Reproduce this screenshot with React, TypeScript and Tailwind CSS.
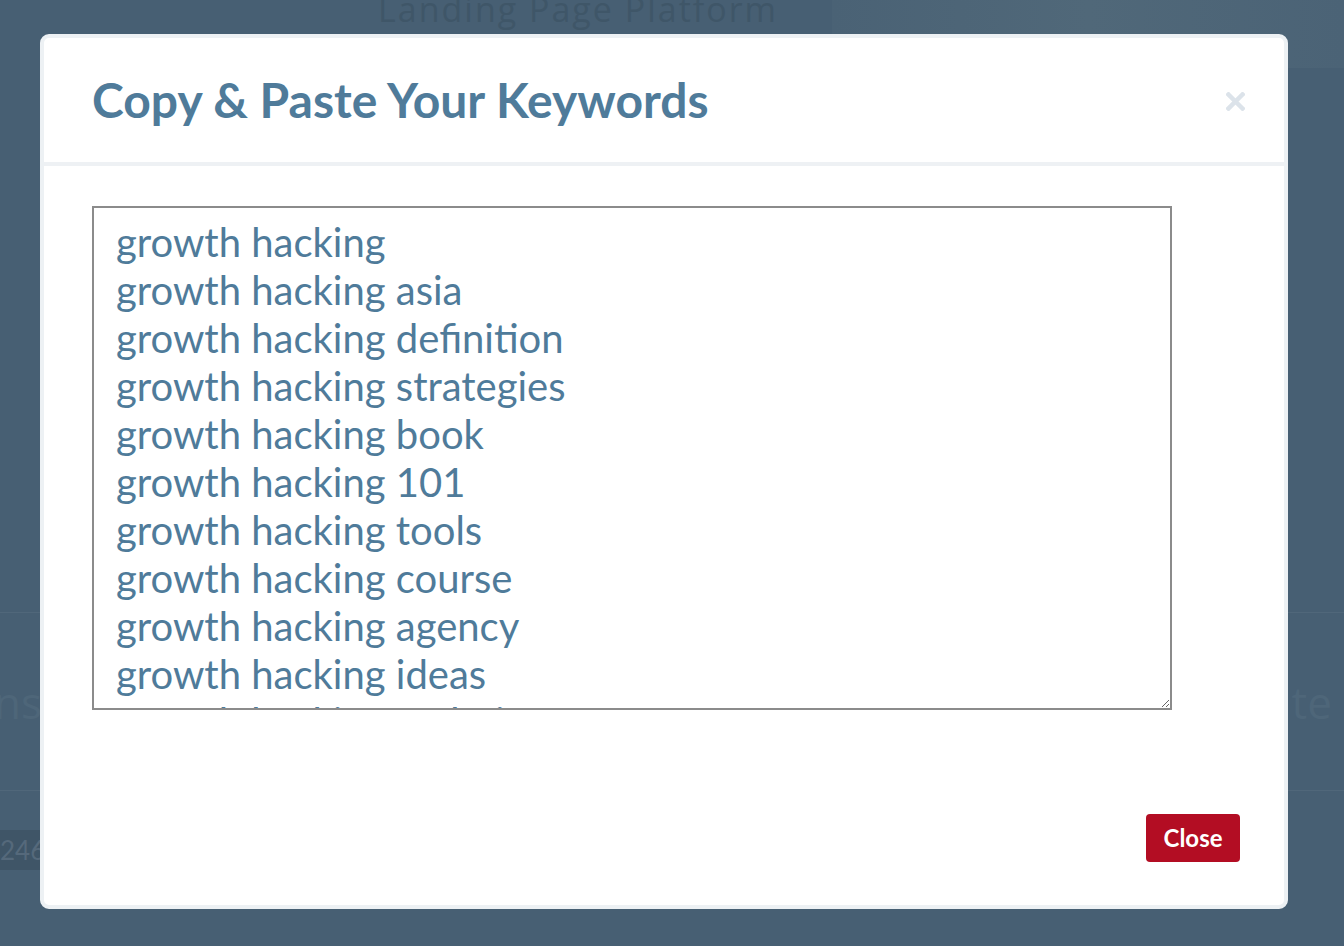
import React from "react";

const keywords = [
  "growth hacking",
  "growth hacking asia",
  "growth hacking definition",
  "growth hacking strategies",
  "growth hacking book",
  "growth hacking 101",
  "growth hacking tools",
  "growth hacking course",
  "growth hacking agency",
  "growth hacking ideas",
  "growth hacking techniques",
  "growth hacking examples",
  "growth hacking marketing",
  "growth hacking startups",
];

export default function App() {
  return (
    <div
      className="relative h-[946px] w-[1344px] overflow-hidden bg-[#475f73]"
      style={{ fontFamily: "Lato, 'Open Sans', sans-serif" }}
    >
      {/* faint page behind the overlay */}
      <div className="flex flex-col">
        <div className="flex h-[70px] items-start">
          <div className="ml-[378px] -mt-[16px] text-[34px] tracking-[2px] text-[#3f5668]" style={{ fontFamily: "'Open Sans', sans-serif" }}>
            Landing Page Platform
          </div>
          <div className="ml-auto h-[68px] w-[512px] bg-gradient-to-r from-[#4a6275] via-[#506879] to-[#4b6376]" />
        </div>
        <div className="mt-[542px] h-px w-full bg-[#50677a]" />
        <div className="flex h-[177px] items-center justify-between">
          <span className="-ml-[6px] text-[44px] text-[#4e6679]" style={{ fontFamily: "'Open Sans', sans-serif" }}>ns</span>
          <span className="mr-[12px] text-[44px] text-[#4e6679]" style={{ fontFamily: "'Open Sans', sans-serif" }}>te</span>
        </div>
        <div className="h-px w-full bg-[#50677a]" />
        <div className="mt-[39px] flex h-[40px] w-[40px] items-center bg-[#3f5567] text-[26px] text-[#55697b]">
          246
        </div>
      </div>

      {/* modal overlay */}
      <div className="absolute inset-0 flex items-start justify-start pl-[40px] pt-[34px]">
        <div className="flex h-[875px] w-[1248px] flex-col rounded-[9px] border-4 border-[#edf1f4] bg-white">
          <div className="flex h-[124px] items-center justify-between pl-[48px] pr-[39px]">
            <h2 className="text-[48px] font-bold leading-none text-[#4f7b9a]">
              Copy &amp; Paste Your Keywords
            </h2>
            <svg width="19" height="19" viewBox="0 0 19 19" className="mt-[2px]">
              <path d="M2.5 2.5 L16.5 16.5 M16.5 2.5 L2.5 16.5" stroke="#dce3ea" strokeWidth="4.5" strokeLinecap="square" />
            </svg>
          </div>
          <div className="h-[4px] w-full bg-[#eef1f4]" />
          <div className="flex flex-1 flex-col pl-[48px] pr-[44px] pt-[40px]">
            <textarea
              readOnly
              defaultValue={keywords.join("\n")}
              className="h-[504px] w-[1080px] resize border-2 border-[#8b8b8b] bg-white pl-[22px] pt-[10px] text-[40px] leading-[48px] text-[#4f7b9a] outline-none"
              style={{ fontFamily: "Lato, sans-serif" }}
            />
            <div className="mt-auto mb-[43px] flex justify-end">
              <button className="h-[48px] w-[94px] rounded-[4px] bg-[#b30d23] text-[24px] font-bold text-white">
                Close
              </button>
            </div>
          </div>
        </div>
      </div>
    </div>
  );
}
